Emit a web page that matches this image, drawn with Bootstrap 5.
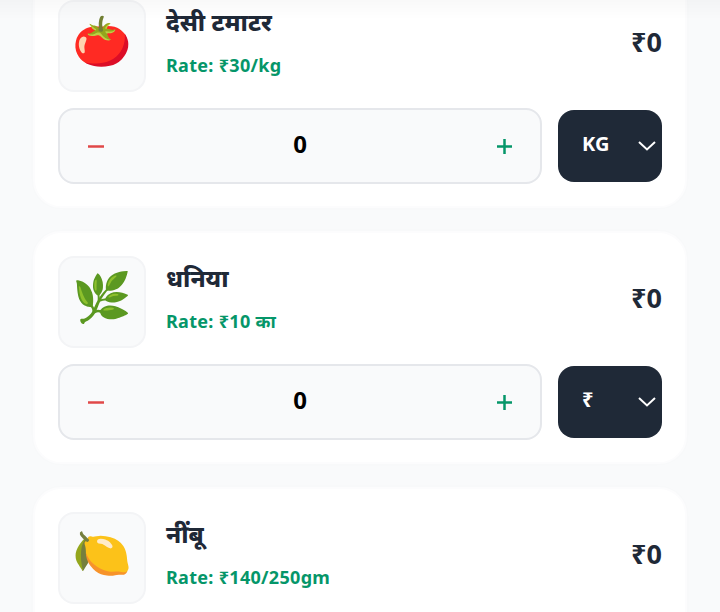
<!DOCTYPE html>
<html lang="en">
<head>
  <meta charset="UTF-8" />
  <meta name="viewport" content="width=device-width, initial-scale=1.0"/>
  <title>Sabzi</title>
  <link href="https://cdn.jsdelivr.net/npm/bootstrap@5.3.0/dist/css/bootstrap.min.css" rel="stylesheet"/>
  <style>
    html, body { height: 612px; overflow: hidden; }
    body { background-color: #f9fafb; font-family: "Noto Sans", sans-serif; font-weight: 700; color: #1f2937; }
    .top-fade { position: fixed; top: 0; left: 0; right: 0; height: 20px; background: linear-gradient(rgba(0,0,0,.025), rgba(0,0,0,0)); }
    .veg-list { margin-top: -25px; padding: 0 33px; }
    .veg-card { height: 233px; background-color: #fff; border: 2px solid #fcfcfd; border-radius: 28px; padding: 23px; margin-bottom: 23px; box-shadow: 0 0 4px rgba(0,0,0,.015); }
    .veg-pic { width: 88px; height: 92px; background-color: #f9fafb; border: 2px solid #f3f4f6; border-radius: 16px; font-size: 48px; line-height: 1; padding-bottom: 13px; }
    .veg-name { font-size: 24px; font-weight: 800; line-height: 32px; margin: 0 0 8px; position: relative; top: -8px; }
    .veg-rate { font-size: 18px; letter-spacing: .3px; line-height: 24px; color: #059669; position: relative; top: -1px; }
    .veg-total { font-size: 27px; line-height: 32px; padding-bottom: 9px; }
    .qty-box { height: 76px; background-color: #f9fafb; border: 2px solid #e5e7eb; border-radius: 16px; padding: 0 26px; }
    .qty-num { font-size: 24px; color: #000; padding-bottom: 4px; }
    .unit-pick { width: 104px; height: 72px; background-color: #1f2937; border-radius: 16px; color: #fff; font-size: 20px; padding: 0 5px 0 24px; }
    .unit-pick span { padding-bottom: 4px; }
  </style>
</head>
<body>
  <div class="veg-list">

    <div class="veg-card">
      <div class="d-flex align-items-center justify-content-between mb-3">
        <div class="d-flex gap-3 align-items-center">
          <div class="veg-pic d-flex align-items-center justify-content-center me-1">🍅</div>
          <div>
            <p class="veg-name">देसी टमाटर</p>
            <div class="veg-rate">Rate: ₹30/kg</div>
          </div>
        </div>
        <div class="veg-total">₹0</div>
      </div>
      <div class="d-flex gap-3 align-items-center">
        <div class="qty-box flex-grow-1 d-flex align-items-center justify-content-between">
          <svg width="20" height="20" viewBox="0 0 20 20"><path d="M2 10.5h16" stroke="#e04848" stroke-width="2.5"/></svg>
          <span class="qty-num">0</span>
          <svg width="20" height="20" viewBox="0 0 20 20"><path d="M3 10.5h15M10.5 3v15" stroke="#059669" stroke-width="2.5"/></svg>
        </div>
        <div class="unit-pick d-flex align-items-center justify-content-between">
          <span>KG</span>
          <svg width="20" height="20" viewBox="0 0 20 20"><path d="M2 6l8 7.5L18 6" fill="none" stroke="#fff" stroke-width="2"/></svg>
        </div>
      </div>
    </div>

    <div class="veg-card">
      <div class="d-flex align-items-center justify-content-between mb-3">
        <div class="d-flex gap-3 align-items-center">
          <div class="veg-pic d-flex align-items-center justify-content-center me-1">🌿</div>
          <div>
            <p class="veg-name">धनिया</p>
            <div class="veg-rate">Rate: ₹10 का</div>
          </div>
        </div>
        <div class="veg-total">₹0</div>
      </div>
      <div class="d-flex gap-3 align-items-center">
        <div class="qty-box flex-grow-1 d-flex align-items-center justify-content-between">
          <svg width="20" height="20" viewBox="0 0 20 20"><path d="M2 10.5h16" stroke="#e04848" stroke-width="2.5"/></svg>
          <span class="qty-num">0</span>
          <svg width="20" height="20" viewBox="0 0 20 20"><path d="M3 10.5h15M10.5 3v15" stroke="#059669" stroke-width="2.5"/></svg>
        </div>
        <div class="unit-pick d-flex align-items-center justify-content-between">
          <span>₹</span>
          <svg width="20" height="20" viewBox="0 0 20 20"><path d="M2 6l8 7.5L18 6" fill="none" stroke="#fff" stroke-width="2"/></svg>
        </div>
      </div>
    </div>

    <div class="veg-card">
      <div class="d-flex align-items-center justify-content-between mb-3">
        <div class="d-flex gap-3 align-items-center">
          <div class="veg-pic d-flex align-items-center justify-content-center me-1">🍋</div>
          <div>
            <p class="veg-name">नींबू</p>
            <div class="veg-rate">Rate: ₹140/250gm</div>
          </div>
        </div>
        <div class="veg-total">₹0</div>
      </div>
    </div>

  </div>
  <div class="top-fade"></div>
</body>
</html>
